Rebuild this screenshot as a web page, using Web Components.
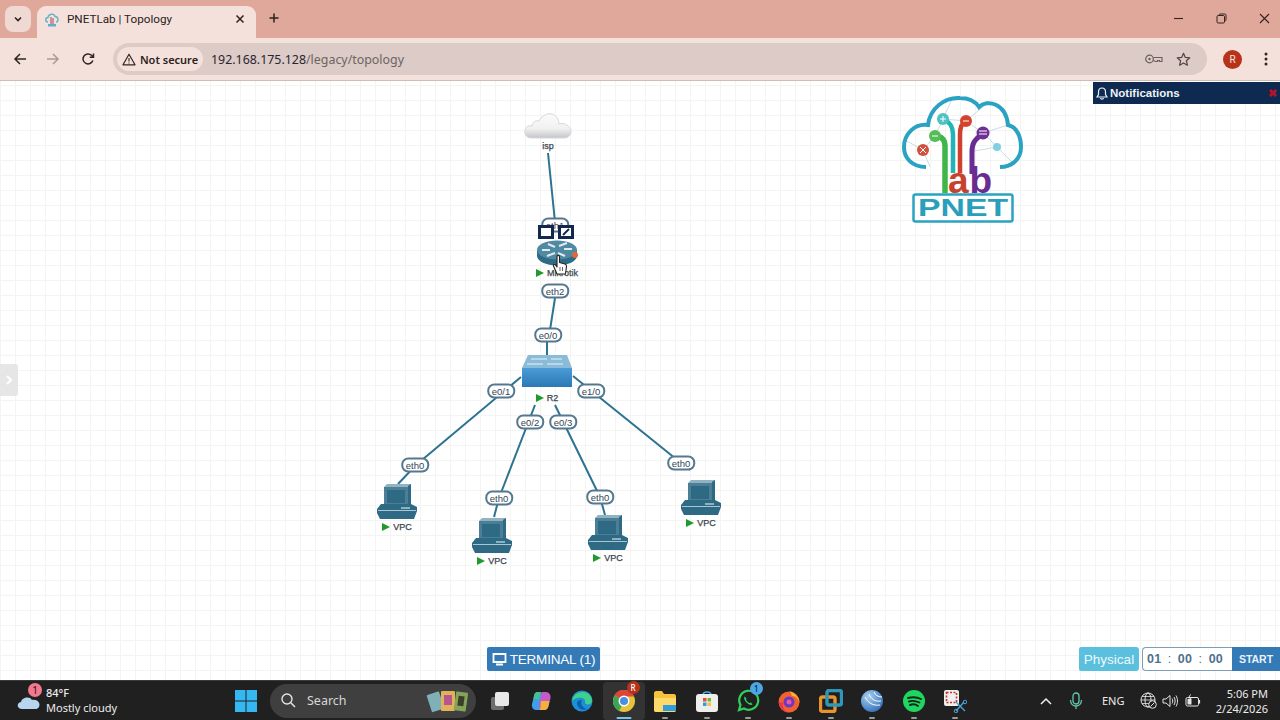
<!DOCTYPE html>
<html>
<head>
<meta charset="utf-8">
<title>PNETLab | Topology</title>
<style>
  html, body { margin: 0; height: 100%; overflow: hidden; }
  body { display: flex; flex-direction: column; width: 1280px; height: 720px; font-family: "Liberation Sans", Arial, sans-serif; }
  pnet-canvas { flex: 1; min-height: 0; }
</style>
</head>
<body>
<browser-chrome></browser-chrome>
<pnet-canvas>
  <pnet-node x="548" y="112" type="cloud" label="isp"></pnet-node>
  <pnet-port x="555" y="225" label="eth1"></pnet-port>
  <pnet-node x="557" y="240" type="router" label="Mikrotik" running></pnet-node>
  <pnet-port x="555" y="291" label="eth2"></pnet-port>
  <pnet-port x="548" y="335" label="e0/0"></pnet-port>
  <pnet-node x="547" y="355" type="switch" label="R2" running></pnet-node>
  <pnet-port x="501" y="391" label="e0/1"></pnet-port>
  <pnet-port x="591" y="391" label="e1/0"></pnet-port>
  <pnet-port x="530" y="422" label="e0/2"></pnet-port>
  <pnet-port x="563" y="422" label="e0/3"></pnet-port>
  <pnet-port x="415" y="465" label="eth0"></pnet-port>
  <pnet-port x="499" y="498" label="eth0"></pnet-port>
  <pnet-port x="600" y="497" label="eth0"></pnet-port>
  <pnet-port x="681" y="463" label="eth0"></pnet-port>
  <pnet-node x="397" y="483" type="pc" label="VPC" running></pnet-node>
  <pnet-node x="492" y="517" type="pc" label="VPC" running></pnet-node>
  <pnet-node x="608" y="514" type="pc" label="VPC" running></pnet-node>
  <pnet-node x="701" y="479" type="pc" label="VPC" running></pnet-node>
  <pnet-hover-tools></pnet-hover-tools>
  <pnet-logo></pnet-logo>
  <pnet-notifications></pnet-notifications>
  <pnet-controls></pnet-controls>
</pnet-canvas>
<win-taskbar></win-taskbar>

<script>
class BrowserChrome extends HTMLElement {
    constructor() {
        super();
        this.attachShadow({ mode: "open" }).innerHTML = `
            <style>
                :host { display: block; flex: none; font-family: Roboto, "Noto Sans", sans-serif; color: #2b2220; }
                .strip { height: 38px; background: #dfa89b; display: flex; align-items: flex-end; padding-left: 5px; position: relative; }
                .tab-list { width: 26px; height: 26px; margin-bottom: 6px; background: #f0d9d3; border-radius: 8px; display: flex; align-items: center; justify-content: center; }
                .tab { width: 219px; height: 32px; margin-left: 6px; background: #f5e1dc; border-radius: 9px 9px 0 0; display: flex; align-items: center; box-sizing: border-box; padding: 0 11px 6px 7px; font-size: 11.700px; }
                .tab span { margin-left: 7px; flex: 1; }
                .new-tab { margin: 0 0 7px 12px; height: 26px; display: flex; align-items: center; }
                .win { margin-left: auto; margin-right: -6px; display: flex; height: 100%; align-self: flex-start; }
                .win div { width: 43px; height: 36px; display: flex; align-items: center; justify-content: center; }
                .bar { height: 43px; box-sizing: border-box; background: #f5e1dc; border-bottom: 1px solid #cdbcb8; display: flex; align-items: center; }
                .nav { width: 33px; display: flex; justify-content: center; }
                .omni { width: 1094px; height: 32px; margin-left: 9px; background: #dccbc6; border-radius: 16px; display: flex; align-items: center; box-sizing: border-box; padding: 0 16px 0 4px; }
                .chip { width: 86px; height: 24px; border-radius: 12px; background: #f5e1dc; display: flex; align-items: center; justify-content: center; gap: 4px; font: 600 11px "Noto Sans", sans-serif; }
                .url { margin-left: 8px; font: 12.400px "Noto Sans", sans-serif; color: #6d6462; flex: 1; }
                .url b { font-weight: 400; color: #2b2530; }
                .tools { display: flex; gap: 13px; align-items: center; }
                .avatar { width: 19px; height: 19px; border-radius: 50%; background: #b8321a; color: #f7e6df; font-size: 10px; display: flex; align-items: center; justify-content: center; margin-left: 16px; }
                .kebab { margin-left: 22px; display: flex; }
            </style>
            <div class="strip">
                <div class="tab-list"><svg width="10" height="10" viewBox="0 0 10 10"><path d="M2 3.500 5 6.500 8 3.500" fill="none" stroke="#2b2220" stroke-width="1.600"/></svg></div>
                <div class="tab">
                    <svg width="16" height="16" viewBox="0 0 16 16"><path d="M4 11C1 11 1 6.500 4 6.500 4.500 2.500 10 2 11 5.500 14.500 5.500 15 11 12 11" fill="none" stroke="#5fb0c4" stroke-width="1.400"/><path d="M7 6V13M9 7V13" stroke="#b06a7c" stroke-width="1.300"/><rect x="4" y="13" width="8" height="2.500" fill="#5fb0c4"/></svg>
                    <span>PNETLab | Topology</span>
                    <svg width="10" height="10" viewBox="0 0 10 10"><path d="M1.500 1.500 8.500 8.500M8.500 1.500 1.500 8.500" stroke="#2b2220" stroke-width="1.500"/></svg>
                </div>
                <div class="new-tab"><svg width="12" height="12" viewBox="0 0 12 12"><path d="M6 1.500V10.500M1.500 6H10.500" stroke="#2b2220" stroke-width="1.500"/></svg></div>
                <div class="win">
                    <div><svg width="11" height="11" viewBox="0 0 11 11"><path d="M1 5.500H10" stroke="#33221e" stroke-width="1.100"/></svg></div>
                    <div><svg width="11" height="11" viewBox="0 0 11 11"><rect x="1" y="2.500" width="7.500" height="7.500" rx="1.200" fill="none" stroke="#33221e"/><path d="M3 2.500V2.200C3 1.500 3.500 1 4.200 1H8.800C9.500 1 10 1.500 10 2.200V6.800C10 7.500 9.500 8 8.800 8H8.500" fill="none" stroke="#33221e"/></svg></div>
                    <div><svg width="11" height="11" viewBox="0 0 11 11"><path d="M1 1 10 10M10 1 1 10" stroke="#33221e" stroke-width="1.100"/></svg></div>
                </div>
            </div>
            <div class="bar">
                <div class="nav" style="margin-left:3px"><svg width="14" height="14" viewBox="0 0 14 14"><path d="M13 7H2M7 2 2 7 7 12" fill="none" stroke="#2f2623" stroke-width="1.500"/></svg></div>
                <div class="nav"><svg width="14" height="14" viewBox="0 0 14 14"><path d="M1 7H12M7 2 12 7 7 12" fill="none" stroke="#a99a96" stroke-width="1.500"/></svg></div>
                <div class="nav" style="margin-left:2px"><svg width="14" height="14" viewBox="0 0 14 14"><path d="M11.800 8.500A5 5 0 1 1 10.500 3.300L12.500 5.300M12.500 1.500V5.300H8.700" fill="none" stroke="#2f2623" stroke-width="1.500"/></svg></div>
                <div class="omni">
                    <div class="chip">
                        <svg width="14" height="13" viewBox="0 0 14 13"><path d="M7 1.200 13 11.800H1Z" fill="none" stroke="#2f2623" stroke-width="1.200" stroke-linejoin="round"/><path d="M7 5V8.500M7 9.500V10.500" stroke="#2f2623" stroke-width="1.100"/></svg>
                        Not secure
                    </div>
                    <div class="url"><b>192.168.175.128</b>/legacy/topology</div>
                    <div class="tools">
                        <svg width="18" height="10" viewBox="0 0 18 10"><circle cx="4.500" cy="5" r="3.800" fill="none" stroke="#6a5f5c" stroke-width="1.200"/><circle cx="4.500" cy="5" r="1.200" fill="#6a5f5c"/><path d="M8.300 3.500H17V7.500H14.500V6.500H12.500V7.500H10.500L8.300 6.500" fill="none" stroke="#6a5f5c" stroke-width="1.100"/></svg>
                        <svg width="15" height="15" viewBox="0 0 15 15"><path d="M7.500 1.300 9.300 5.400 13.800 5.800 10.400 8.800 11.400 13.200 7.500 10.900 3.600 13.200 4.600 8.800 1.200 5.800 5.700 5.400Z" fill="none" stroke="#4f4542" stroke-width="1.200" stroke-linejoin="round"/></svg>
                    </div>
                </div>
                <div class="avatar">R</div>
                <div class="kebab"><svg width="4" height="14" viewBox="0 0 4 14"><circle cx="2" cy="2" r="1.500" fill="#2f2623"/><circle cx="2" cy="7" r="1.500" fill="#2f2623"/><circle cx="2" cy="12" r="1.500" fill="#2f2623"/></svg></div>
            </div>`;
    }
}

class PnetCanvas extends HTMLElement {
    constructor() {
        super();
        // link coordinates are page coordinates, the canvas starts at y=81
        const links = [
            [548,153,555,222], [555,298,550,330], [547,342,547,355],
            [521,377,416,465], [416,465,398,484],
            [535,405,499,498], [499,498,494,517],
            [555,405,600,497], [600,497,605,515],
            [573,376,681,463], [681,463,690,470]
        ];
        const lines = links.map(l => `<line x1="${l[0]}" y1="${l[1] - 81}" x2="${l[2]}" y2="${l[3] - 81}"/>`).join("");
        this.attachShadow({ mode: "open" }).innerHTML = `
            <style>
                :host {
                    display: block; position: relative; overflow: hidden;
                    background-color: #fff;
                    background-image: linear-gradient(#f4f4f3 1px, transparent 1px), linear-gradient(90deg, #f4f4f3 1px, transparent 1px);
                    background-size: 15px 15px;
                    background-position: 0 4px;
                }
                .links { position: absolute; left: 0; top: 0; }
                line { stroke: #2b7390; stroke-width: 2; }
                .side { position: absolute; left: 0; top: 283px; width: 18px; height: 32px; background: #e6e6e6; border-radius: 0 3px 3px 0; display: flex; align-items: center; justify-content: center; }
            </style>
            <svg class="links" width="1280" height="599">${lines}</svg>
            <slot></slot>
            <div class="side"><svg width="8" height="12" viewBox="0 0 8 12"><path d="M2 2 6 6 2 10" fill="none" stroke="#fff" stroke-width="2"/></svg></div>`;
    }
}

const NODE_ICONS = {
    cloud: { gap: 1, svg: `<svg width="48" height="27" viewBox="0 0 48 27"><defs><linearGradient id="c" x1="0" y1="0" x2="0" y2="1"><stop offset="0" stop-color="#fbfbfb"/><stop offset=".6" stop-color="#f1f1f2"/><stop offset="1" stop-color="#c4c5c9"/></linearGradient></defs><path d="M7 26C2 26 0 21 1 18 2 14 6 13 8 14 8 10 12 8 15 9 18 3 25 0 30 3 34 5 35 9 35 12 40 10 46 14 47 18 48 23 44 26 40 26Z" fill="url(#c)" stroke="#d8d8da"/></svg>` },
    router: { gap: 1, svg: `<svg width="42" height="26" viewBox="0 0 42 26"><path d="M1 10V16C1 21 10 25.500 21 25.500S41 21 41 16V10Z" fill="#2f6b84"/><ellipse cx="21" cy="10" rx="20" ry="9.500" fill="#4f8aa2"/><path d="M6 10H14M23 6 31 3M22 13 29 16M12 4 19 7M19 13 11 16M28 9H36" stroke="#dfeaef" stroke-width="2" fill="none"/><circle cx="39" cy="15" r="3" fill="#e2683a"/></svg>` },
    switch: { gap: 5, svg: `<svg width="50" height="32" viewBox="0 0 50 32"><defs><linearGradient id="s" x1="0" y1="0" x2="0" y2="1"><stop offset="0" stop-color="#4a9bd6"/><stop offset="1" stop-color="#2b78b5"/></linearGradient></defs><path d="M6 0H45L50 13H0Z" fill="#8abbd9"/><path d="M0 13H50V32H0Z" fill="url(#s)"/><path d="M9 4H25M25 9H41M5 9H21M29 4H40" stroke="#eaf4fa" stroke-width="1.200"/></svg>` },
    pc: { gap: 1, svg: `<svg width="40" height="37" viewBox="0 0 40 37"><path d="M7 4 10 1H34V21L31 23H7Z" fill="#8fb3c3"/><path d="M31 3 34 1V21L31 23Z" fill="#2f6a85"/><rect x="7" y="4" width="24" height="19" fill="#4c7f96"/><rect x="10" y="7" width="18" height="13" fill="#2f6a85"/><path d="M4 21H34L40 24V28L37 36H3L0 30V26Z" fill="#2f6a85"/><path d="M1 27.500H39" stroke="#a9c6d3" stroke-width="1.200"/><path d="M24 25H33" stroke="#cfe0e7" stroke-width="1.200"/></svg>` }
};

class PnetNode extends HTMLElement {
    connectedCallback() {
        const icon = NODE_ICONS[this.getAttribute("type")];
        const running = this.hasAttribute("running");
        const shadow = this.attachShadow({ mode: "open" });
        shadow.innerHTML = `
            <style>
                :host { position: absolute; transform: translateX(-50%); display: flex; flex-direction: column; align-items: center; font: 9px "Liberation Sans", Arial, sans-serif; -webkit-text-stroke: .25px #3c4650; color: #3c4650; white-space: nowrap; }
                svg { display: block; }
                .label { display: flex; align-items: center; gap: 3px; margin-top: ${icon.gap}px; height: 12px; }
                .tri { width: 0; height: 0; border-left: 8px solid #1f9a2d; border-top: 4.500px solid transparent; border-bottom: 4.500px solid transparent; }
            </style>
            ${icon.svg}
            <div class="label">${running ? '<div class="tri"></div>' : ""}<span>${this.getAttribute("label")}</span></div>`;
        this.style.left = this.getAttribute("x") + "px";
        this.style.top = (this.getAttribute("y") - 81) + "px";
    }
}

class PnetPort extends HTMLElement {
    connectedCallback() {
        this.attachShadow({ mode: "open" }).innerHTML = `
            <style>
                :host { position: absolute; transform: translate(-50%, -50%); box-sizing: border-box; height: 15px; padding: 0 2.500px; background: #fff; border: 2px solid #54798f; border-radius: 7px; font: 9.500px/11px "Liberation Sans", Arial, sans-serif; color: #33475a; white-space: nowrap; }
            </style>${this.getAttribute("label")}`;
        this.style.left = this.getAttribute("x") + "px";
        this.style.top = (this.getAttribute("y") - 81) + "px";
    }
}

// edit/select boxes and the hand pointer over the hovered router
class PnetHoverTools extends HTMLElement {
    constructor() {
        super();
        this.attachShadow({ mode: "open" }).innerHTML = `
            <style>
                :host { position: absolute; left: 537px; top: 143px; width: 48px; height: 60px; }
                .box { position: absolute; top: 1px; width: 10px; height: 8px; border: 3px solid #12294d; background: #fff; }
                .box svg { position: absolute; left: 0; top: -1px; }
                .hand { position: absolute; left: 15px; top: 30px; }
            </style>
            <div class="box" style="left:1px"></div>
            <div class="box" style="left:21px"><svg width="10" height="10" viewBox="0 0 10 10"><path d="M2 8 8 2" stroke="#12294d" stroke-width="2"/></svg></div>
            <svg class="hand" width="16" height="22" viewBox="0 0 16 22"><path d="M5 20 1.500 12C1 10.500 2.500 10 3.500 11L5 13V2.500C5 1 7.500 1 7.500 2.500V8.500L13 10C14.500 10.500 14.500 11.500 14.500 12.500L13.500 20Z" fill="#fff" stroke="#222" stroke-width="1.100" stroke-linejoin="round"/><path d="M8 13V17M10.500 13V17" stroke="#222" stroke-width=".7"/></svg>`;
    }
}

class PnetLogo extends HTMLElement {
    constructor() {
        super();
        this.attachShadow({ mode: "open" }).innerHTML = `
            <style>
                :host { position: absolute; left: 890px; top: 9px; width: 145px; height: 140px; }
                svg { display: block; }
                text { font-family: "Liberation Sans", Arial, sans-serif; font-weight: bold; }
            </style>
            <svg width="145" height="140" viewBox="0 0 145 140">
                <path d="M33 60 45 46 53 29 76 31 93 43 107 57M53 29 62 9M76 31 95 15M107 57 79 62M93 43 118 35M33 60 15 50M33 60 40 77M107 57 125 75" fill="none" stroke="#b9d5de" stroke-width=".8"/>
                <path d="M36 77C22 77 14 68 14 57 14 44 25 33 38 35 40 18 55 7 70 8 79 8 85 11 89 17 97 9 116 13 118 35 127 37 131 47 131 57 131 69 122 77 110 77" fill="none" stroke="#2aa3c2" stroke-width="4"/>
                <path d="M45 46C52 46 55 50 55 56V103" fill="none" stroke="#3fb54a" stroke-width="5.500"/>
                <path d="M53 29C60 32 63 36 63 44V83" fill="none" stroke="#22b5b8" stroke-width="4.500"/>
                <path d="M76 31C72 33 70 37 70 44V83" fill="none" stroke="#d0402e" stroke-width="4.500"/>
                <path d="M93 43C85 50 82 52 82 62V84" fill="none" stroke="#6a2c91" stroke-width="5"/>
                <circle cx="33" cy="60" r="6" fill="#d2503f"/>
                <circle cx="45" cy="46" r="6" fill="#54bd57"/>
                <circle cx="53" cy="29" r="6" fill="#4cc3c0"/>
                <circle cx="76" cy="31" r="6" fill="#d5432f"/>
                <circle cx="93" cy="43" r="6.500" fill="#6f2f96"/>
                <circle cx="107" cy="57" r="4" fill="#7fd0e2"/>
                <path d="M30 57 36 63M36 57 30 63M50 29H56M53 26V32M42 46H48M73 31H79M89 41H97M89 44H97" stroke="#fff" stroke-width="1"/>
                <text x="58" y="103" font-size="37" fill="#c8412f">a</text>
                <text x="79.500" y="103" font-size="37" fill="#6a2c91">b</text>
                <rect x="23.500" y="104.500" width="99" height="27" rx="2" fill="#fff" stroke="#2aa3c2" stroke-width="2.500"/>
                <text x="28" y="126" font-size="23" textLength="90" lengthAdjust="spacingAndGlyphs" fill="#2a9fbb">PNET</text>
            </svg>`;
    }
}

class PnetNotifications extends HTMLElement {
    constructor() {
        super();
        this.attachShadow({ mode: "open" }).innerHTML = `
            <style>
                :host { position: absolute; right: 0; top: 1px; width: 187px; height: 22px; background: #0f2a50; color: #eef2f6; display: flex; align-items: center; box-sizing: border-box; padding: 0 3px; font: bold 11.500px "Liberation Sans", Arial, sans-serif; }
                span { margin-left: 2px; flex: 1; }
                i { color: #b3142c; font: bold 11px "Liberation Sans", Arial, sans-serif; }
            </style>
            <svg width="12" height="13" viewBox="0 0 12 13"><path d="M6 1C3.500 1 2.500 3 2.500 5V7.500L1 10H11L9.500 7.500V5C9.500 3 8.500 1 6 1ZM4.500 11C4.800 12.500 7.200 12.500 7.500 11" fill="none" stroke="#eef2f6" stroke-width="1.200"/></svg>
            <span>Notifications</span><i>✖</i>`;
    }
}

class PnetControls extends HTMLElement {
    constructor() {
        super();
        this.attachShadow({ mode: "open" }).innerHTML = `
            <style>
                :host { position: absolute; left: 0; right: 0; top: 566px; height: 24px; font-family: "Liberation Sans", Arial, sans-serif; }
                .term { position: absolute; left: 487px; width: 113px; height: 24px; background: #337ab7; border-radius: 2px; color: #fff; font-size: 13.500px; letter-spacing: -.2px; display: flex; align-items: center; justify-content: center; gap: 3px; }
                .right { position: absolute; right: 0; height: 24px; display: flex; }
                .phys { width: 60px; margin-right: 3px; background: #5bc0de; color: #eef9fc; border-radius: 2px 3px 3px 2px; font-size: 13.500px; display: flex; align-items: center; justify-content: center; }
                .timer { width: 90px; box-sizing: border-box; border: 1px solid #7f9db4; border-right: 0; border-radius: 4px 0 0 4px; background: #fff; color: #4f708c; font-size: 12.500px; font-weight: bold; display: flex; align-items: center; justify-content: space-between; padding: 0 9px 0 4px; letter-spacing: .2px; }
                .timer i { font-style: normal; font-weight: 400; }
                .start { width: 48px; background: #337ab7; color: #eaf2f9; font-size: 10.500px; font-weight: bold; display: flex; align-items: center; justify-content: center; }
            </style>
            <div class="term">
                <svg width="15" height="14" viewBox="0 0 15 14"><path d="M1.500 2H13.500V10H1.500Z" fill="none" stroke="#fff" stroke-width="1.800"/><path d="M4 12.500H11" stroke="#fff" stroke-width="2"/></svg>
                <span>TERMINAL (1)</span>
            </div>
            <div class="right">
                <div class="phys">Physical</div>
                <div class="timer"><span>01</span><i>:</i><span>00</span><i>:</i><span>00</span></div>
                <div class="start">START</div>
            </div>`;
    }
}

class WinTaskbar extends HTMLElement {
    constructor() {
        super();
        const taskIcons = [
            [`<svg width="22" height="22" viewBox="0 0 22 22"><rect x="2" y="7" width="13" height="13" rx="2" fill="#6d6d6d"/><rect x="6" y="2" width="14" height="14" rx="2" fill="#e8e8e8"/></svg>`, ""],
            [`<svg width="22" height="22" viewBox="0 0 22 22"><path d="M8 2C5 2 4.500 4 4 6L2 14C1.500 17 3 20 6 20H10L13 8C13.500 5 12 2 8 2Z" fill="#3f9fe8"/><path d="M14 20C17 20 18 18 18.500 16L20.500 8C21 5 19 2 16 2H12L9 14C8.500 17 10 20 14 20Z" fill="#c85ac8"/><path d="M11 11H19.500L18.500 16C18 18 17 20 14 20H9.500C11 18 10.500 14 11 11Z" fill="#f2b23a"/><path d="M8 2H12C10 3 9.500 6 9 9H3.500L4 6C4.500 4 5 2 8 2Z" fill="#43c48f"/></svg>`, ""],
            [`<svg width="24" height="24" viewBox="0 0 24 24"><circle cx="12" cy="12" r="10.500" fill="#1c8fd6"/><path d="M2 12C3 6 8 3 13 3 18 3 22 7 22 12 22 15 18 16 16 15 14 14 17 10 12 9 7 8 4 10 2 12Z" fill="#3fd08c"/><path d="M7 14C7 19 12 22 17 20 12 19 10 14 12 11 9 11 7 12 7 14Z" fill="#0f5fa8"/></svg>`, ""],
            [`<svg width="24" height="24" viewBox="0 0 24 24"><circle cx="12" cy="12" r="11" fill="#e8c23a"/><path d="M12 12 2.500 6.500A11 11 0 0 1 22 7.500H12Z" fill="#dc4538"/><path d="M12 12 7.200 21.900A11 11 0 0 1 2.500 6.500Z" fill="#3aa655"/><circle cx="12" cy="12" r="5.500" fill="#fff"/><circle cx="12" cy="12" r="4" fill="#4a8fe0"/></svg><b class="badge red" style="right:5px;top:-1px">R</b>`, "active"],
            [`<svg width="24" height="22" viewBox="0 0 24 22"><path d="M1 3C1 2 2 1 3 1H9L11 4H21C22 4 23 5 23 6V20C23 21 22 22 21 22H3C2 22 1 21 1 20Z" fill="#f5c33b"/><path d="M1 8H23V20C23 21 22 22 21 22H3C2 22 1 21 1 20Z" fill="#fbd96b"/><rect x="10" y="15" width="13" height="6" fill="#2f9ee0"/></svg>`, "open"],
            [`<svg width="24" height="24" viewBox="0 0 24 24"><path d="M8 6C8 2 16 2 16 6" fill="none" stroke="#3fb0e8" stroke-width="1.600"/><rect x="1" y="5" width="22" height="18" rx="3" fill="#f0eeec"/><rect x="8" y="9" width="3.500" height="3.500" fill="#e4502f"/><rect x="12.500" y="9" width="3.500" height="3.500" fill="#6cb83a"/><rect x="8" y="13.500" width="3.500" height="3.500" fill="#2f9ee0"/><rect x="12.500" y="13.500" width="3.500" height="3.500" fill="#f5c33b"/></svg>`, "open"],
            [`<svg width="24" height="24" viewBox="0 0 24 24"><path d="M3 21 4.500 16A9.500 9.500 0 1 1 8 19.500Z" fill="none" stroke="#2fd35c" stroke-width="2.200"/><path d="M8.500 7.500C7.500 9 8.500 11.500 10.500 13.500 12.500 15.500 15 16.500 16.500 15.500L15 13.500 13.500 14C12 13.500 10.500 12 10 10.500L10.500 9.500Z" fill="#2fd35c"/></svg><b class="badge blue" style="right:6px;top:0">1</b>`, "open"],
            [`<svg width="24" height="24" viewBox="0 0 24 24"><circle cx="12" cy="13" r="10.500" fill="#f0612f"/><path d="M13 2C18 4 23 9 22.500 14 21 8 17 7 15 7Z" fill="#f9b233"/><circle cx="12" cy="13" r="5.500" fill="#6b37c4"/><circle cx="12" cy="13" r="2.500" fill="#e85a9a"/><path d="M2 13C2 19 7 23.500 12 23.500 7 22 5 18 6 14Z" fill="#e8344f"/></svg>`, "open"],
            [`<svg width="24" height="24" viewBox="0 0 24 24"><rect x="1.500" y="8" width="14.500" height="14.500" rx="2" fill="none" stroke="#e8932c" stroke-width="3.400"/><rect x="8" y="1.500" width="14.500" height="14.500" rx="2" fill="none" stroke="#2f97b8" stroke-width="3.400"/></svg>`, "open"],
            [`<svg width="24" height="24" viewBox="0 0 24 24"><defs><radialGradient id="w" cx=".35" cy=".3" r=".9"><stop offset="0" stop-color="#a9cff2"/><stop offset="1" stop-color="#1d5fae"/></radialGradient></defs><circle cx="12" cy="12" r="11" fill="url(#w)"/><path d="M5 8C8 14 13 17 20 16M9 5C11 10 15 13 21 12M14 3C15 6 18 8 22 8" fill="none" stroke="#fff" stroke-width="1"/></svg>`, "open"],
            [`<svg width="24" height="24" viewBox="0 0 24 24"><circle cx="12" cy="12" r="11" fill="#1ed760"/><path d="M6 9C10 8 15 8 19 10M7 12.500C10 11.500 14 12 17.500 13.500M8 16C10.500 15 14 15.500 16 17" fill="none" stroke="#14251a" stroke-width="1.900" stroke-linecap="round"/></svg>`, "open"],
            [`<svg width="24" height="24" viewBox="0 0 24 24"><rect x="1" y="1" width="15" height="16" rx="2" fill="#efefef"/><rect x="3.500" y="3.500" width="10" height="10" fill="none" stroke="#c0392b" stroke-width="1.600" stroke-dasharray="2 1.500"/><path d="M13 13 22 22M21 13 13 22" stroke="#4aa3d8" stroke-width="1.400"/><circle cx="22" cy="13" r="1.800" fill="none" stroke="#4aa3d8"/><circle cx="13" cy="22" r="1.800" fill="none" stroke="#4aa3d8"/></svg>`, "open"]
        ];
        const cells = taskIcons.map(([svg, state]) => `<div class="app ${state}">${svg}</div>`).join("");
        this.attachShadow({ mode: "open" }).innerHTML = `
            <style>
                :host { display: flex; flex: none; align-items: center; height: 40px; background: #202020; border-top: 1px solid #3a3a3a; box-sizing: border-box; color: #ececec; font-family: "Noto Sans", "Open Sans", sans-serif; position: relative; }
                .weather { width: 225px; display: flex; align-items: center; padding-left: 16px; box-sizing: border-box; gap: 4px; font-size: 11px; line-height: 15px; position: relative; top: -1px; }
                .weather b { font-weight: 500; display: block; }
                .weather .n { position: absolute; left: 28px; top: -2px; width: 14px; height: 14px; border-radius: 50%; background: #f2778f; color: #2a1015; font-size: 10px; line-height: 14px; text-align: center; }
                .start { width: 41px; height: 38px; display: flex; align-items: center; justify-content: center; }
                .search { width: 206px; height: 34px; margin-left: 4px; border-radius: 17px; background: #3f3f3f; display: flex; align-items: center; box-sizing: border-box; padding: 0 6px 0 10px; font-size: 12.500px; color: #d6d6d6; gap: 10px; }
                .search span { flex: 1; }
                .apps { display: flex; margin-left: 3px; }
                .app { width: 41.400px; height: 38px; display: flex; align-items: center; justify-content: center; position: relative; }
                .app.active { background: #333; border-radius: 4px; }
                .app.active::after, .app.open::after { content: ""; position: absolute; bottom: 1px; left: 50%; transform: translateX(-50%); height: 2px; border-radius: 1px; }
                .app.active::after { width: 15px; background: #6fc6ef; }
                .app.open::after { width: 6px; background: #9a9a9a; }
                .badge { position: absolute; width: 13px; height: 13px; border-radius: 50%; font: 500 8px/13px "Noto Sans", sans-serif; text-align: center; color: #fff; }
                .badge.red { background: #b8321a; }
                .badge.blue { background: #4aa8e8; color: #10202c; }
                .tray { position: absolute; right: 0; top: 0; bottom: 0; width: 246px; display: flex; align-items: center; font-size: 11px; }
                .tray > * { flex: none; }
                .clock { margin-left: auto; margin-right: 12px; text-align: right; line-height: 15px; font-size: 11px; }
            </style>
            <div class="weather">
                <svg width="26" height="22" viewBox="0 0 26 22"><path d="M6 20C1 20 0 14 5 13 6 8 14 7 16 11 21 10 25 14 23 18 22 19.500 21 20 19 20Z" fill="#b7d5ef"/></svg>
                <div class="n">1</div>
                <div><b>84°F</b>Mostly cloudy</div>
            </div>
            <div class="start"><svg width="24" height="24" viewBox="0 0 24 24"><path d="M1 1H11.500V11.500H1ZM12.500 1H23V11.500H12.500ZM1 12.500H11.500V23H1ZM12.500 12.500H23V23H12.500Z" fill="#35b8f2"/></svg></div>
            <div class="search">
                <svg width="17" height="17" viewBox="0 0 17 17"><circle cx="7" cy="7" r="5" fill="none" stroke="#e4e4e4" stroke-width="1.400"/><path d="M10.800 10.800 15 15" stroke="#e4e4e4" stroke-width="1.500"/></svg>
                <span>Search</span>
                <svg width="44" height="26" viewBox="0 0 44 26"><rect x="3" y="5" width="13" height="18" rx="1" fill="#7fb0b8" transform="rotate(-18 9 14)"/><rect x="15" y="3" width="14" height="20" rx="1" fill="#e0b25a"/><rect x="18" y="7" width="8" height="10" fill="#b8558c"/><rect x="29" y="4" width="12" height="19" rx="1" fill="#86a35a" transform="rotate(8 35 13)"/><rect x="32" y="8" width="6" height="10" fill="#3a3f2a" transform="rotate(8 35 13)"/></svg>
            </div>
            <div class="apps">${cells}</div>
            <div class="tray">
                <svg style="margin-left:6px" width="12" height="8" viewBox="0 0 12 8"><path d="M1 7 6 2 11 7" fill="none" stroke="#f0f0f0" stroke-width="1.500"/></svg>
                <svg style="margin-left:17px" width="14" height="18" viewBox="0 0 14 18"><rect x="4" y="1" width="6" height="11" rx="3" fill="none" stroke="#63c5ae" stroke-width="1.300"/><path d="M1.500 8C1.500 16 12.500 16 12.500 8M7 14V17" fill="none" stroke="#63c5ae" stroke-width="1.300"/></svg>
                <span style="margin-left:19px;width:26px">ENG</span>
                <svg style="margin-left:11.500px" width="17" height="17" viewBox="0 0 17 17"><circle cx="8" cy="8" r="7" fill="none" stroke="#e4e4e4"/><ellipse cx="8" cy="8" rx="3" ry="7" fill="none" stroke="#e4e4e4"/><path d="M1 8H15M2 4.500H14M2 11.500H14" stroke="#e4e4e4" stroke-width=".8"/><circle cx="12.500" cy="12.500" r="3.800" fill="#202020" stroke="#e4e4e4"/><path d="M10.500 14.500 14.500 10.500" stroke="#e4e4e4"/></svg>
                <svg style="margin-left:5.500px" width="16" height="14" viewBox="0 0 16 14"><path d="M1 5H4L8 1.500V12.500L4 9H1Z" fill="none" stroke="#e4e4e4"/><path d="M10 4.500C11 6 11 8 10 9.500M12 3C13.500 5.500 13.500 8.500 12 11M14 1.500C16 5 16 9 14 12.500" fill="none" stroke="#e4e4e4"/></svg>
                <svg style="margin-left:7px" width="16" height="14" viewBox="0 0 16 14"><rect x="1" y="3.500" width="12.500" height="8.500" rx="1.500" fill="none" stroke="#e4e4e4"/><path d="M14.500 6V9.500" stroke="#e4e4e4" stroke-width="1.200"/><path d="M5.500 0.500 3.500 4H6L4.500 7" fill="none" stroke="#e4e4e4"/><rect x="2.500" y="5" width="4" height="5.500" fill="#e4e4e4"/></svg>
                <div class="clock">5:06 PM<br>2/24/2026</div>
            </div>`;
    }
}

customElements.define("browser-chrome", BrowserChrome);
customElements.define("pnet-canvas", PnetCanvas);
customElements.define("pnet-node", PnetNode);
customElements.define("pnet-port", PnetPort);
customElements.define("pnet-hover-tools", PnetHoverTools);
customElements.define("pnet-logo", PnetLogo);
customElements.define("pnet-notifications", PnetNotifications);
customElements.define("pnet-controls", PnetControls);
customElements.define("win-taskbar", WinTaskbar);
</script>
</body>
</html>
